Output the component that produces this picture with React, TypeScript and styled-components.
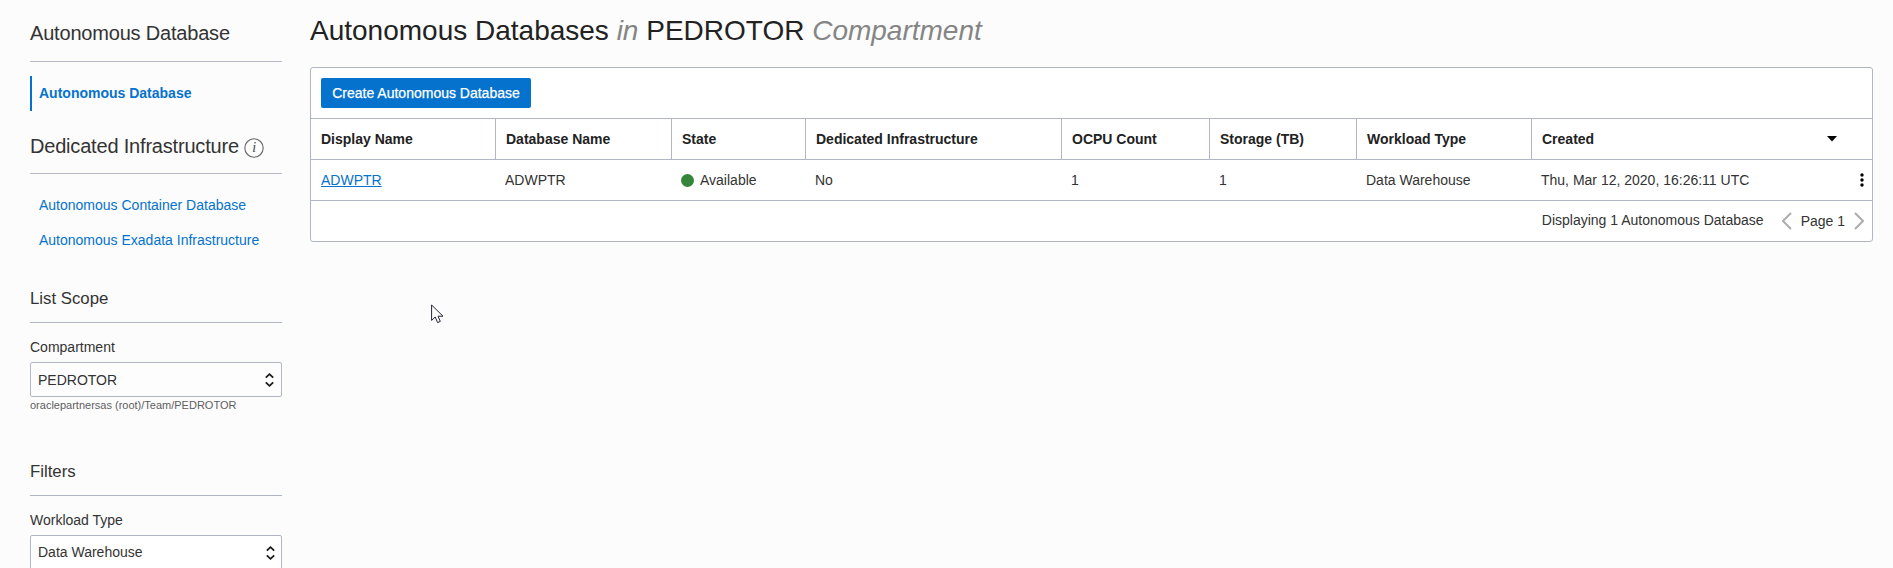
import React from "react";
import styled, { createGlobalStyle } from "styled-components";

const line = "#b0b7c3";
const ink = "#333";
const strong = "#222";
const blue = "#0572ce";

const GlobalStyle = createGlobalStyle`
  * { box-sizing: border-box; }
  html, body { margin: 0; height: 100%; overflow: hidden; }
  body {
    background: #fcfcfc;
    color: ${ink};
    font: 14px/20px "Liberation Sans", Arial, sans-serif;
  }
`;

const Page = styled.div`
  display: flex;
  align-items: flex-start;
  gap: 28px;
  height: 568px;
  padding: 0 20px 0 30px;
  overflow: hidden;
`;

const Sidebar = styled.aside`
  flex: 0 0 252px;
  display: flex;
  flex-direction: column;
`;

const Section = styled.section<{ $top: number }>`
  padding-top: ${(p) => p.$top}px;
`;

const SideTitle = styled.h2<{ $small?: boolean; $bottom?: number }>`
  display: flex;
  align-items: center;
  gap: 5px;
  margin: 0;
  height: ${(p) => (p.$small ? 36 : 42)}px;
  padding-bottom: ${(p) => p.$bottom ?? 12}px;
  border-bottom: 1px solid ${(p) => (p.$small ? line : "#b9b7c5")};
  font-size: ${(p) => (p.$small ? 16.8 : 20)}px;
  font-weight: 400;
  letter-spacing: ${(p) => (p.$small ? 0 : -0.19)}px;
  line-height: 24px;
  white-space: nowrap;
`;

const NavList = styled.nav`
  display: flex;
  flex-direction: column;
  padding-top: 14px;
`;

const NavLink = styled.a<{ $active?: boolean }>`
  height: 35px;
  padding-left: ${(p) => (p.$active ? 7 : 9)}px;
  border-left: ${(p) => (p.$active ? `2px solid ${blue}` : "0")};
  color: ${blue};
  font-weight: ${(p) => (p.$active ? 700 : 400)};
  line-height: 34px;
  white-space: nowrap;
`;

const FieldLabel = styled.label`
  display: block;
  padding: 14px 0 5px;
`;

const SelectBox = styled.div<{ $native?: boolean }>`
  display: flex;
  align-items: center;
  justify-content: space-between;
  height: 35px;
  padding: 0 ${(p) => (p.$native ? "6px 2px" : "7px 0")} 7px;
  border: 1px solid ${line};
  border-radius: 2px;
  background: ${(p) => (p.$native ? "#fff" : "#fdfdfd")};
`;

const UpDownIcon = styled.svg<{ $drop?: number }>`
  margin-top: ${(p) => p.$drop ?? 0}px;
`;

const PathHint = styled.div`
  color: #5e5e5e;
  font-size: 11px;
  line-height: 17px;
`;

const Main = styled.main`
  flex: 1;
  min-width: 0;
`;

const PageTitle = styled.h1`
  margin: 0;
  padding-top: 15px;
  height: 67px;
  font-size: 28px;
  font-weight: 400;
  line-height: 32px;
  color: ${strong};
  em { color: #858585; }
`;

const Card = styled.div`
  border: 1px solid ${line};
  border-radius: 3px;
  background: #fff;
`;

const Toolbar = styled.div`
  height: 51px;
  padding: 10px;
  border-bottom: 1px solid ${line};
`;

const CreateButton = styled.button`
  display: block;
  width: 210px;
  height: 30px;
  padding: 0;
  border: 0;
  border-radius: 2px;
  background: ${blue};
  color: #fff;
  font: inherit;
  -webkit-text-stroke: 0.25px #fff;
`;

const Row = styled.div`
  display: grid;
  grid-template-columns: 185px 176px 134px 256px 148px 147px 175px 1fr;
  height: 41px;
  border-bottom: 1px solid ${line};
`;

const HeadCell = styled.div`
  display: flex;
  align-items: center;
  justify-content: space-between;
  padding: 0 35px 0 10px;
  border-right: 1px solid ${line};
  color: ${strong};
  font-weight: 700;
  white-space: nowrap;
  &:last-child { border-right: 0; }
`;

const Cell = styled.div`
  display: flex;
  align-items: center;
  gap: 6px;
  padding: 0 8px 0 9px;
  white-space: nowrap;
  &:first-child { padding-left: 10px; }
`;

const NameLink = styled.a`
  color: ${blue};
  text-decoration: underline;
`;

const StatusDot = styled.span`
  width: 13px;
  height: 13px;
  border-radius: 50%;
  background: #35863a;
`;

const MenuIcon = styled.svg`
  margin-left: auto;
`;

const Footer = styled.footer`
  display: flex;
  align-items: center;
  justify-content: flex-end;
  height: 40px;
  padding-right: 8px;
`;

const Summary = styled.span`
  padding-bottom: 2px;
  margin-right: 18px;
`;

const PageNumber = styled.span`
  margin: 0 9px;
`;

const Pointer = styled.svg`
  position: absolute;
  left: 431px;
  top: 304px;
`;

const InfoBadge = styled.svg`
  margin-top: 4px;
`;

const InfoIcon = () => (
  <InfoBadge width="20" height="20" viewBox="0 0 20 20">
    <circle cx="10" cy="10" r="9.2" fill="none" stroke="#666" strokeWidth="1.1" />
    <text x="10" y="14.3" textAnchor="middle" fontFamily="Liberation Serif, serif" fontStyle="italic" fontSize="14" fill="#444">i</text>
  </InfoBadge>
);

const UpDown = ({ drop }: { drop?: number }) => (
  <UpDownIcon $drop={drop} width="9" height="14" viewBox="0 0 9 14" fill="none" stroke="#1a1a1a" strokeWidth="1.8">
    <path d="M.8 4.6 4.5 1.2 8.2 4.6M.8 9.4 4.5 12.8 8.2 9.4" />
  </UpDownIcon>
);

const Chevron = ({ right }: { right?: boolean }) => (
  <svg width="10" height="18" viewBox="0 0 10 18" fill="none" stroke="#adadad" strokeWidth="2">
    <path d={right ? "M1 1 9 9 1 17" : "M9 1 1 9 9 17"} />
  </svg>
);

const headings = ["Display Name", "Database Name", "State", "Dedicated Infrastructure", "OCPU Count", "Storage (TB)", "Workload Type"];

export default function App() {
  return (
    <>
      <GlobalStyle />
      <Page>
        <Sidebar>
          <Section $top={20}>
            <SideTitle $bottom={15}>Autonomous Database</SideTitle>
            <NavList>
              <NavLink $active>Autonomous Database</NavLink>
            </NavList>
          </Section>
          <Section $top={21}>
            <SideTitle $bottom={14}>Dedicated Infrastructure<InfoIcon /></SideTitle>
            <NavList>
              <NavLink>Autonomous Container Database</NavLink>
              <NavLink>Autonomous Exadata Infrastructure</NavLink>
            </NavList>
          </Section>
          <Section $top={29}>
            <SideTitle $small>List Scope</SideTitle>
            <FieldLabel>Compartment</FieldLabel>
            <SelectBox>PEDROTOR<UpDown /></SelectBox>
            <PathHint>oraclepartnersas (root)/Team/PEDROTOR</PathHint>
          </Section>
          <Section $top={46}>
            <SideTitle $small>Filters</SideTitle>
            <FieldLabel>Workload Type</FieldLabel>
            <SelectBox $native>Data Warehouse<UpDown drop={3} /></SelectBox>
          </Section>
        </Sidebar>
        <Main>
          <PageTitle>Autonomous Databases <em>in</em> PEDROTOR <em>Compartment</em></PageTitle>
          <Card>
            <Toolbar><CreateButton>Create Autonomous Database</CreateButton></Toolbar>
            <Row>
              {headings.map((h) => <HeadCell key={h}>{h}</HeadCell>)}
              <HeadCell>
                Created
                <svg width="10" height="6" viewBox="0 0 10 6"><path d="M0 0H10L5 5.5Z" fill="#000" /></svg>
              </HeadCell>
            </Row>
            <Row>
              <Cell><NameLink>ADWPTR</NameLink></Cell>
              <Cell>ADWPTR</Cell>
              <Cell><StatusDot />Available</Cell>
              <Cell>No</Cell>
              <Cell>1</Cell>
              <Cell>1</Cell>
              <Cell>Data Warehouse</Cell>
              <Cell>
                Thu, Mar 12, 2020, 16:26:11 UTC
                <MenuIcon width="4" height="14" viewBox="0 0 4 14">
                  <circle cx="2" cy="2" r="1.7" /><circle cx="2" cy="7" r="1.7" /><circle cx="2" cy="12" r="1.7" />
                </MenuIcon>
              </Cell>
            </Row>
            <Footer>
              <Summary>Displaying 1 Autonomous Database</Summary>
              <Chevron /><PageNumber>Page 1</PageNumber><Chevron right />
            </Footer>
          </Card>
        </Main>
      </Page>
      <Pointer width="13" height="20" viewBox="0 0 13 20">
        <path d="M.6 1V16.4L4.2 13 6.6 18.6 9.3 17.4 7 12.2H12Z" fill="#fff" stroke="#223" strokeWidth="1" />
      </Pointer>
    </>
  );
}
